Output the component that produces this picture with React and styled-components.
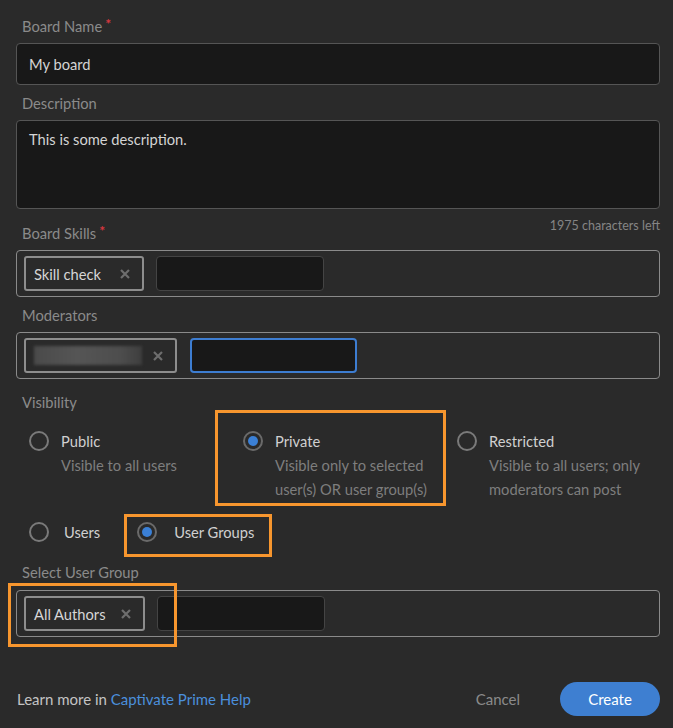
import React from "react";
import styled, { createGlobalStyle } from "styled-components";

const Global = createGlobalStyle`
  html, body { margin: 0; padding: 0; background: #2a2a2a; }
  body { font-family: Lato, "Open Sans", sans-serif; }
  * { box-sizing: border-box; }
`;

const Page = styled.div`
  width: 673px;
  height: 728px;
  background: #2a2a2a;
  padding: 16px 13px 0 16px;
  color: #d0d0d0;
  font-size: 14.7px;
`;

const Label = styled.div`
  height: 20px;
  line-height: 20px;
  padding-left: 6px;
  color: #8a8a8a;
  font-size: 14.7px;
  margin-top: ${(p) => p.$mt || 0}px;
  margin-bottom: ${(p) => (p.$mb === undefined ? 7 : p.$mb)}px;
`;

const Star = styled.span`
  color: #d7373f;
  margin-left: 3px;
  font-size: 14px;
  font-weight: 700;
  vertical-align: top;
  line-height: 16px;
`;

const TextInput = styled.div`
  height: 42px;
  background: #181818;
  border: 1px solid #555;
  border-radius: 4px;
  padding: 0 12px;
  display: flex;
  align-items: center;
  color: #d4d4d4;
`;

const FieldWrap = styled.div`
  position: relative;
`;

const TextArea = styled.div`
  height: 89px;
  background: #181818;
  border: 1px solid #555;
  border-radius: 4px;
  padding: 8px 12px;
  color: #d4d4d4;
  line-height: 20px;
`;

const Counter = styled.div`
  position: absolute;
  right: 0;
  top: calc(100% + 9px);
  font-size: 12.5px;
  line-height: 16px;
  color: #858585;
`;

const TagBox = styled.div`
  height: 47px;
  border: 1px solid #8a8a8a;
  border-radius: 4px;
  padding: 5px 7px;
  display: flex;
  align-items: center;
  gap: ${(p) => p.$gap || 12}px;
`;

const Chip = styled.div`
  position: relative;
  width: ${(p) => p.$w}px;
  height: 35px;
  border: 2px solid #8d8d8d;
  border-radius: 3px;
  background: #2a2a2a;
  display: flex;
  align-items: center;
  justify-content: space-between;
  padding: 0 12px 0 8px;
  color: #d6d6d6;
  font-size: 14.7px;
`;

const XIcon = () => (
  <svg width="10" height="10" viewBox="0 0 10 10">
    <path d="M1 1 L9 9 M9 1 L1 9" stroke="#6e6e6e" strokeWidth="2.2" strokeLinecap="butt" />
  </svg>
);

const Blurred = styled.div`
  width: 108px;
  height: 19px;
  background: linear-gradient(90deg, #4a4a4a, #555 40%, #4d4d4d 80%, #3e3e3e);
  filter: blur(1.5px);
`;

const TagInput = styled.div`
  width: ${(p) => p.$w}px;
  height: 35px;
  background: #181818;
  border: ${(p) => (p.$focus ? "2px solid #3d7dd1" : "1px solid #444")};
  border-radius: 4px;
`;

const OptionGrid = styled.div`
  display: grid;
  grid-template-columns: 214px 214px 1fr;
  align-items: start;
  justify-items: start;
  padding-left: 13px;
  margin-top: 17px;
`;

const OptionRow = styled.div`
  display: flex;
  padding-left: 13px;
  margin-top: 19px;
  gap: 37px;
`;

const Option = styled.div`
  position: relative;
  display: flex;
  align-items: flex-start;
  gap: ${(p) => p.$gap || 12}px;
`;

const Radio = styled.span`
  flex: none;
  width: 20px;
  height: 20px;
  margin-top: 2px;
  border-radius: 50%;
  border: 2px solid ${(p) => (p.$on ? "#6a6a6a" : "#7a7a7a")};
  display: flex;
  align-items: center;
  justify-content: center;
  &::after {
    content: "";
    width: 10px;
    height: 10px;
    border-radius: 50%;
    background: #3b80d6;
    display: ${(p) => (p.$on ? "block" : "none")};
  }
`;

const OptText = styled.div`
  line-height: 24px;
`;

const OptTitle = styled.div`
  color: #d0d0d0;
`;

const OptDesc = styled.div`
  color: #7e7e7e;
`;

const Highlight = styled.div`
  position: absolute;
  top: ${(p) => p.$t}px;
  left: ${(p) => p.$l}px;
  width: ${(p) => p.$w}px;
  height: ${(p) => p.$h}px;
  border: 3px solid #f7962e;
  pointer-events: none;
`;

const Footer = styled.div`
  margin-top: 45px;
  display: flex;
  align-items: center;
  height: 34px;
  font-size: 15px;
`;

const Learn = styled.div`
  flex: 1;
  color: #c4c4c4;
  padding-left: 1px;
`;

const Link = styled.span`
  color: #4b8fdc;
`;

const Cancel = styled.div`
  color: #8a8a8a;
  margin-right: 40px;
`;

const CreateBtn = styled.div`
  width: 100px;
  height: 34px;
  border-radius: 17px;
  background: #3e7fd1;
  color: #fff;
  display: flex;
  align-items: center;
  justify-content: center;
  font-size: 15px;
`;

export default function App() {
  return (
    <>
      <Global />
      <Page>
        <Label>
          Board Name<Star>*</Star>
        </Label>
        <TextInput>My board</TextInput>

        <Label $mt={8}>Description</Label>
        <FieldWrap>
          <TextArea>This is some description.</TextArea>
          <Counter>1975 characters left</Counter>
        </FieldWrap>

        <Label $mt={14}>
          Board Skills<Star>*</Star>
        </Label>
        <TagBox>
          <Chip $w={120}>
            Skill check
            <XIcon />
          </Chip>
          <TagInput $w={168} />
        </TagBox>

        <Label $mt={8}>Moderators</Label>
        <TagBox $gap={13}>
          <Chip $w={153}>
            <Blurred />
            <XIcon />
          </Chip>
          <TagInput $w={167} $focus />
        </TagBox>

        <Label $mt={13} $mb={0}>Visibility</Label>
        <OptionGrid>
          <Option>
            <Radio />
            <OptText>
              <OptTitle>Public</OptTitle>
              <OptDesc>Visible to all users</OptDesc>
            </OptText>
          </Option>
          <Option>
            <Radio $on />
            <OptText>
              <OptTitle>Private</OptTitle>
              <OptDesc>
                Visible only to selected
                <br />
                user(s) OR user group(s)
              </OptDesc>
            </OptText>
            <Highlight $t={-19} $l={-28} $w={231} $h={96} />
          </Option>
          <Option>
            <Radio />
            <OptText>
              <OptTitle>Restricted</OptTitle>
              <OptDesc>
                Visible to all users; only
                <br />
                moderators can post
              </OptDesc>
            </OptText>
          </Option>
        </OptionGrid>

        <OptionRow>
          <Option $gap={15}>
            <Radio />
            <OptText>
              <OptTitle>Users</OptTitle>
            </OptText>
          </Option>
          <Option $gap={17}>
            <Radio $on />
            <OptText>
              <OptTitle>User Groups</OptTitle>
            </OptText>
            <Highlight $t={-6} $l={-13} $w={148} $h={43} />
          </Option>
        </OptionRow>

        <Label $mt={18} $mb={8}>Select User Group</Label>
        <TagBox>
          <Chip $w={121}>
            All Authors
            <XIcon />
            <Highlight $t={-15} $l={-18} $w={169} $h={64} />
          </Chip>
          <TagInput $w={168} />
        </TagBox>

        <Footer>
          <Learn>
            Learn more in <Link>Captivate Prime Help</Link>
          </Learn>
          <Cancel>Cancel</Cancel>
          <CreateBtn>Create</CreateBtn>
        </Footer>
      </Page>
    </>
  );
}
